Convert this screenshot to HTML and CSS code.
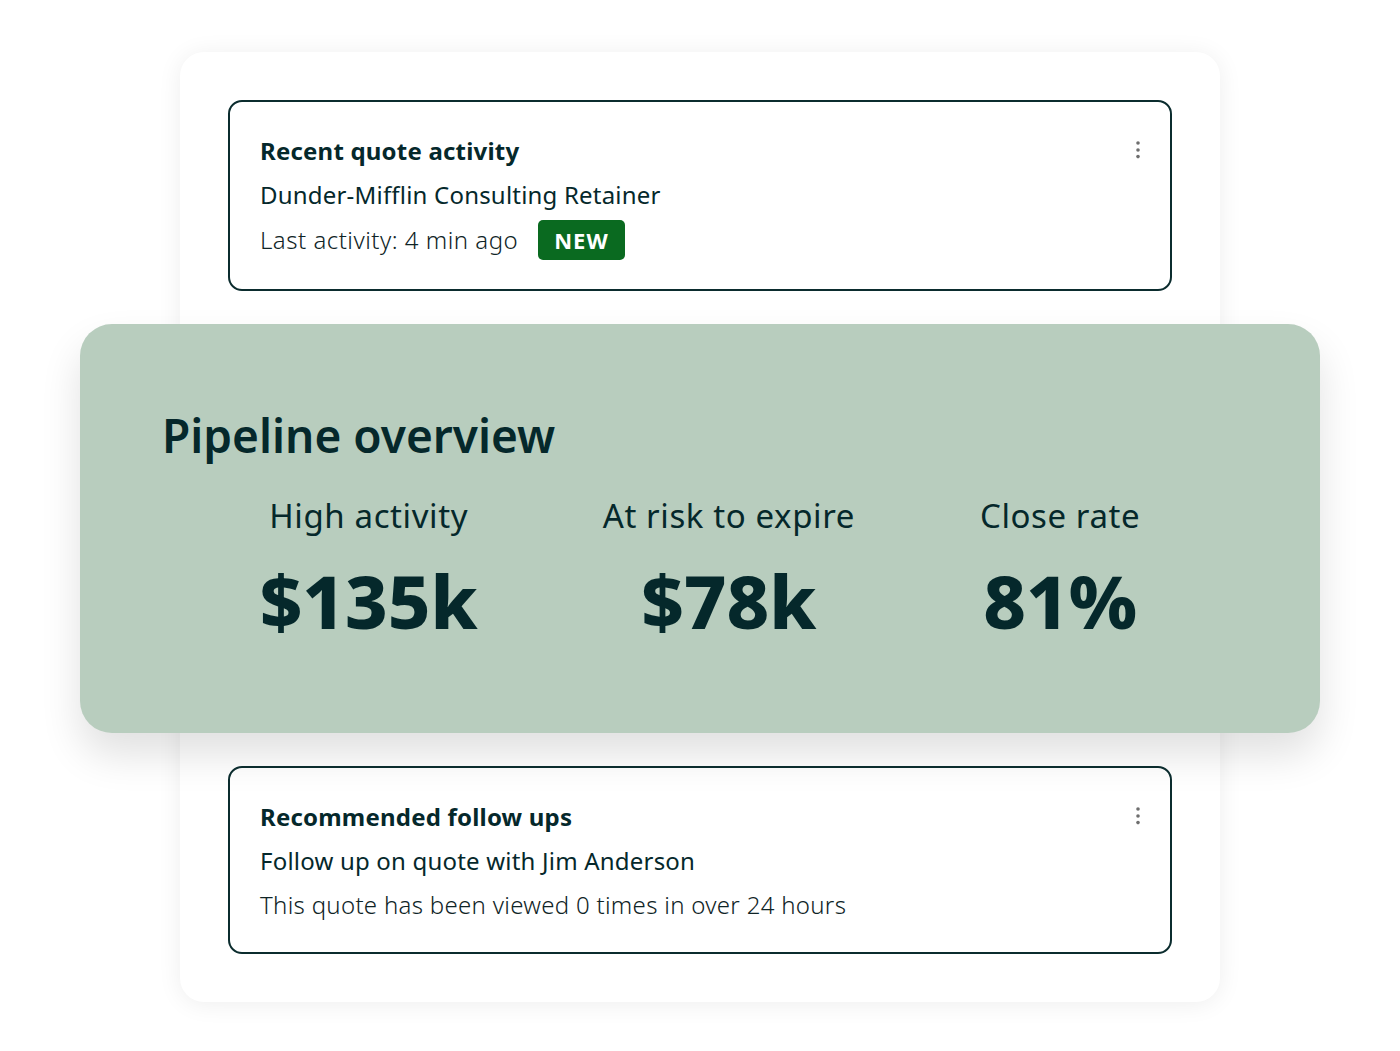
FILE: index.html
```html
<!DOCTYPE html>
<html>
<head>
    <title>Quotes Dashboard</title>
    <link rel="stylesheet" href="styles.css">
</head>
<body>
    <div class="board">
        <div class="panel">
            <div class="panel-head">
                <h3>Recent quote activity</h3>
                <button class="kebab" aria-label="More options">
                    <svg width="6" height="18" viewBox="0 0 6 18"><circle cx="3" cy="2" r="1.8"/><circle cx="3" cy="9" r="1.8"/><circle cx="3" cy="15.6" r="1.8"/></svg>
                </button>
            </div>
            <p class="panel-main">Dunder-Mifflin Consulting Retainer</p>
            <div class="panel-meta">
                <span>Last activity: 4 min ago</span>
                <span class="badge">NEW</span>
            </div>
        </div>

        <div class="overview">
            <h2>Pipeline overview</h2>
            <div class="stats">
                <div class="stat">
                    <div class="stat-label">High activity</div>
                    <div class="stat-value">$135k</div>
                </div>
                <div class="stat">
                    <div class="stat-label">At risk to expire</div>
                    <div class="stat-value">$78k</div>
                </div>
                <div class="stat">
                    <div class="stat-label">Close rate</div>
                    <div class="stat-value">81%</div>
                </div>
            </div>
        </div>

        <div class="panel">
            <div class="panel-head">
                <h3>Recommended follow ups</h3>
                <button class="kebab" aria-label="More options">
                    <svg width="6" height="18" viewBox="0 0 6 18"><circle cx="3" cy="2" r="1.8"/><circle cx="3" cy="9" r="1.8"/><circle cx="3" cy="15.6" r="1.8"/></svg>
                </button>
            </div>
            <p class="panel-main">Follow up on quote with Jim Anderson</p>
            <p class="panel-note">This quote has been viewed 0 times in over 24 hours</p>
        </div>
    </div>
</body>
</html>
```

FILE: styles.css
```css
body {
    margin: 0;
    padding: 52px 0 50px;
    background-color: #fff;
    font-family: "Noto Sans", Arial, sans-serif;
    color: #05282b;
}
.board {
    width: 944px;
    margin: 0 auto;
    padding: 48px;
    background-color: #fff;
    border-radius: 24px;
    box-shadow: 0 2px 24px rgba(0, 0, 0, 0.07);
    display: flex;
    flex-direction: column;
    gap: 33px;
}
.panel {
    border: 2px solid #0b2c2e;
    border-radius: 14px;
    padding: 35px 30px 29px;
}
.panel-head {
    display: flex;
    justify-content: space-between;
    align-items: flex-start;
}
h3 {
    margin: 0;
    font-size: 24px;
    line-height: 28px;
    font-weight: 700;
    letter-spacing: 0.2px;
}
.kebab {
    border: none;
    background: none;
    padding: 0;
    margin: 4px -1px 0 0;
    width: 6px;
    height: 18px;
    fill: #6e6e6e;
    cursor: pointer;
}
.panel-main {
    margin: 16px 0 0;
    font-size: 24px;
    line-height: 28px;
    letter-spacing: 0.2px;
}
.panel-meta {
    margin-top: 11px;
    display: flex;
    align-items: center;
    gap: 20px;
    font-size: 24px;
    line-height: 40px;
    font-weight: 300;
    letter-spacing: 0.5px;
    color: #0f2426;
}
.panel-note {
    margin: 16px 0 0;
    padding-bottom: 4px;
    font-size: 24px;
    line-height: 28px;
    font-weight: 300;
    letter-spacing: 0.3px;
    color: #0f2426;
}
.badge {
    background-color: #0a6a20;
    color: #fff;
    font-weight: 700;
    font-size: 22px;
    letter-spacing: 1px;
    line-height: 40px;
    padding: 0 16px;
    border-radius: 5px;
}
.overview {
    margin: 0 -148px;
    background-color: #b8cdbe;
    border-radius: 32px;
    padding: 82px 82px 93px;
    box-shadow: 0 22px 40px rgba(0, 0, 0, 0.12);
}
h2 {
    margin: 0;
    font-size: 46px;
    line-height: 58px;
    font-weight: 600;
}
.stats {
    margin-top: 31px;
    display: flex;
    justify-content: center;
    gap: 125px;
}
.stat {
    text-align: center;
}
.stat-label {
    font-size: 33px;
    line-height: 42px;
    letter-spacing: 0.6px;
}
.stat-value {
    margin-top: 25px;
    font-size: 74px;
    line-height: 78px;
    font-weight: 800;
}
```
